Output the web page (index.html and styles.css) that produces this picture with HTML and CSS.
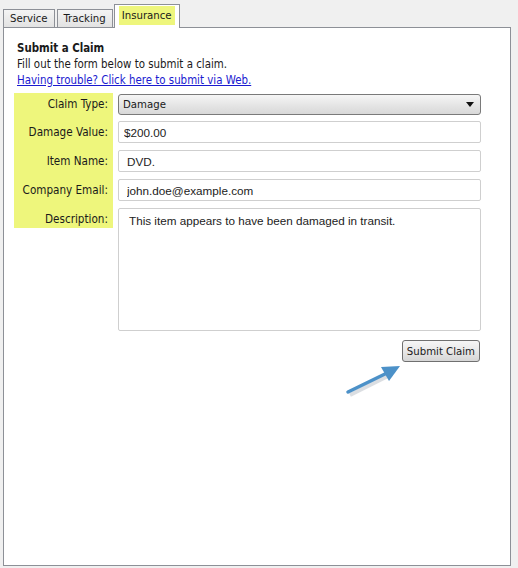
FILE: index.html
```html
<!DOCTYPE html>
<html lang="en">
<head>
    <meta charset="UTF-8">
    <meta name="viewport" content="width=device-width, initial-scale=1.0">
    <title>Insurance Claim</title>
    <link rel="stylesheet" href="styles.css">
</head>
<body>
    <div class="tabs">
        <div class="tab">Service</div>
        <div class="tab">Tracking</div>
        <div class="tab active"><span class="mark">Insurance</span></div>
    </div>

    <div class="panel">
        <div class="intro">
            <h1>Submit a Claim</h1>
            <p>Fill out the form below to submit a claim.</p>
            <a href="#">Having trouble? Click here to submit via Web.</a>
        </div>

        <form class="claim">
            <label for="type">Claim Type:</label>
            <div class="select" id="type">
                <span>Damage</span>
                <span class="caret"></span>
            </div>

            <label for="value">Damage Value:</label>
            <input type="text" id="value" value="$200.00">

            <label for="item">Item Name:</label>
            <input type="text" id="item" class="indent" value="DVD.">

            <label for="email">Company Email:</label>
            <input type="text" id="email" class="indent" value="john.doe@example.com">

            <label class="short" for="desc">Description:</label>
            <textarea id="desc">This item appears to have been damaged in transit.</textarea>

            <div class="actions">
                <button type="button">Submit Claim</button>
            </div>
        </form>

        <svg class="pointer" width="70" height="40" viewBox="0 0 70 40">
            <line x1="6" y1="33" x2="44" y2="14" stroke="#9aa3ad" stroke-width="4" opacity="0.35" transform="translate(1,2)"/>
            <line x1="5" y1="32" x2="44" y2="13" stroke="#4c91c8" stroke-width="3.5" stroke-linecap="round"/>
            <polygon points="57,6 38,7 46,21" fill="#4c91c8"/>
        </svg>
    </div>
</body>
</html>
```

FILE: styles.css
```css
body {
    margin: 0;
    background-color: #f0f0f0;
    font-family: Tahoma, "DejaVu Sans Condensed", "Liberation Sans", sans-serif;
    font-size: 11px;
    color: #1a1a1a;
}

.tabs {
    display: flex;
    align-items: flex-end;
    height: 27px;
    padding-left: 3px;
}

.tab {
    height: 17px;
    line-height: 17px;
    padding: 0 6px;
    margin-right: 2px;
    border: 1px solid #8d9097;
    border-bottom: none;
    background: linear-gradient(#f4f4f4, #e2e2e2);
    font-size: 11.3px;
}

.tab.active {
    position: relative;
    z-index: 1;
    height: 23px;
    line-height: 21px;
    margin: 0 0 -1px -1px;
    padding: 0 4px;
    background: #fff;
}

.mark {
    display: inline-block;
    background-color: #eef67c;
    padding: 0 3px;
    line-height: 19px;
}

.panel {
    position: relative;
    box-sizing: border-box;
    width: 508px;
    height: 539px;
    margin-left: 3px;
    padding: 12px 10px 0;
    background-color: #fff;
    border: 1px solid #8d9097;
}

.intro {
    padding-left: 3px;
    line-height: 16px;
    font-size: 11.4px;
}

h1 {
    margin: 0;
    font-size: 11.4px;
    font-weight: bold;
}

.intro p {
    margin: 0;
}

.intro a {
    color: #1a1ad0;
}

.claim {
    display: grid;
    grid-template-columns: 99px 363px;
    column-gap: 5px;
    margin-top: 5px;
}

label {
    background-color: #eef67c;
    text-align: right;
    padding: 4px 5px 0 0;
    line-height: 15px;
    font-size: 11.6px;
}

label.short {
    align-self: start;
    height: 16px;
}

.select {
    display: flex;
    justify-content: space-between;
    align-items: center;
    box-sizing: border-box;
    height: 21px;
    margin: 1px 0 6px;
    padding: 0 6px 0 4px;
    border: 1px solid #7a7a7a;
    border-radius: 3px;
    background: linear-gradient(#f6f6f6, #e6e6e6 50%, #d8d8d8);
    font-size: 11.3px;
}

.caret {
    width: 0;
    height: 0;
    border-left: 4px solid transparent;
    border-right: 4px solid transparent;
    border-top: 5px solid #111;
}

input[type="text"],
textarea {
    box-sizing: border-box;
    width: 100%;
    margin: 0 0 7px;
    border: 1px solid #cfcfcf;
    border-radius: 2px;
    font-family: "Liberation Sans", Arial, sans-serif;
    font-size: 11.7px;
    color: #222;
}

input[type="text"] {
    height: 22px;
    padding: 0 5px;
}

input.indent {
    padding-left: 8px;
}

textarea {
    height: 123px;
    margin: 0;
    padding: 5px 10px;
    resize: none;
}

.actions {
    grid-column: 2;
    display: flex;
    justify-content: flex-end;
    padding: 9px 1px 0 0;
}

button {
    height: 22px;
    padding: 0 4px;
    border: 1px solid #707070;
    border-radius: 3px;
    background: linear-gradient(#f6f6f6, #e8e8e8 50%, #d6d6d6);
    font-family: Tahoma, "DejaVu Sans Condensed", "Liberation Sans", sans-serif;
    font-size: 11.3px;
    color: #1a1a1a;
}

.pointer {
    position: absolute;
    left: 339px;
    top: 332px;
}
```
